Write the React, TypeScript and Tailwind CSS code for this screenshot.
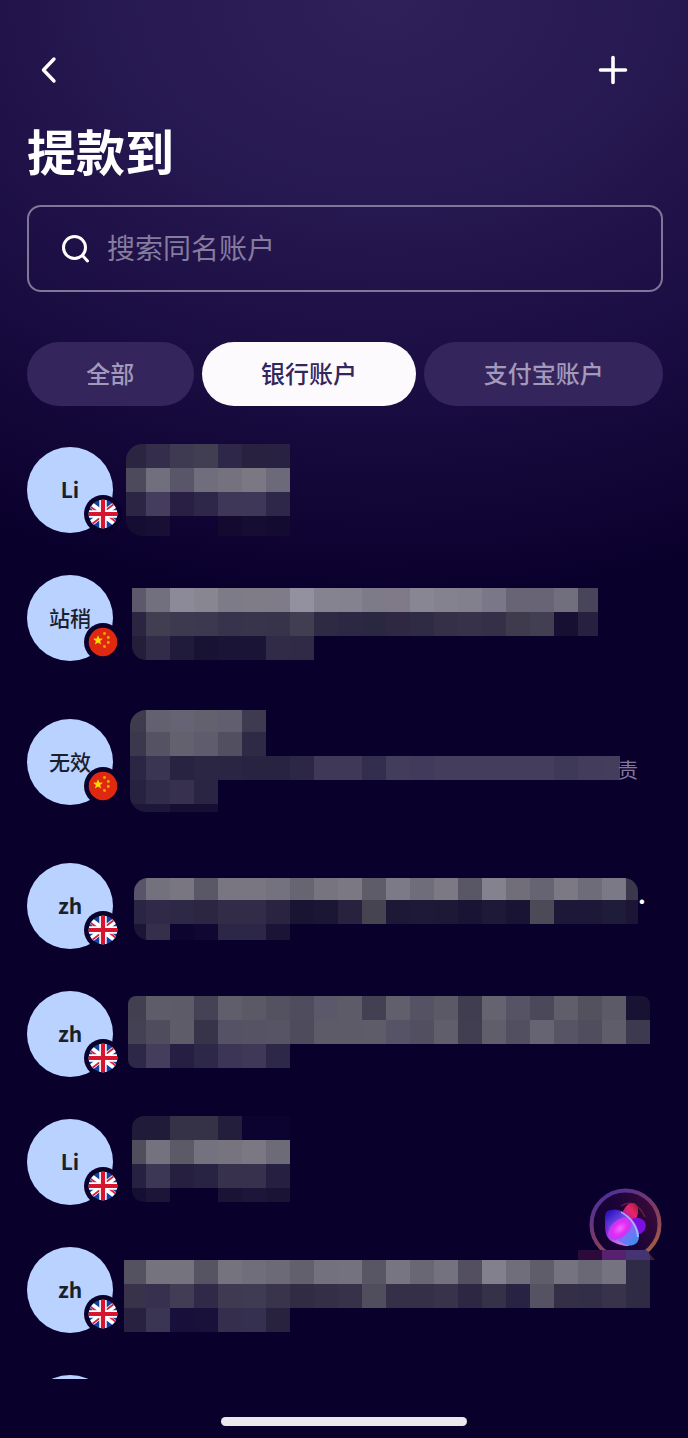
import { useState } from 'react'

interface Strip {
  h: number
  colors: string
}

interface Mosaic {
  x: number // left edge, measured from the avatar
  y: number // top edge inside the row
  width: number
  radius: number
  roundRight?: boolean
  squareTop?: boolean
  strips: Strip[]
}

interface Account {
  id: number
  initials?: string
  country: 'gb' | 'cn'
  tall?: boolean
  tail?: string
  tailClass?: string
  mosaic?: Mosaic
}

const CELL = 24
const GRID_START = 33 // every mosaic snaps to the same column grid

const TABS = [
  { key: 'all', label: '全部' },
  { key: 'bank', label: '银行账户' },
  { key: 'alipay', label: '支付宝账户' },
]

// colors: one hex per cell, "-" leaves the cell empty
const ACCOUNTS: Account[] = [
  {
    id: 1,
    initials: 'Li',
    country: 'gb',
    mosaic: {
      x: 13, y: 18, width: 164, radius: 16,
      strips: [
        { h: 24, colors: '2b2541 342d4b 3e3a51 423e52 2e2749 28213f 282141' },
        { h: 24, colors: '4d4a5c 716f7d 59566a 706e7d 75717f 7b7883 6c697a' },
        { h: 24, colors: '2c2644 453d5d 291f45 2f2749 3f3757 3f3757 2f2749' },
        { h: 20, colors: '150d32 170f34 - - 140a30 160d33 140b30' },
      ],
    },
  },
  {
    id: 2,
    initials: '站稍',
    country: 'cn',
    mosaic: {
      x: 19, y: 34, width: 466, radius: 14, squareTop: true,
      strips: [
        { h: 24, colors: '5d596b 72707e 8c8a98 888690 7e7b89 7f7c88 7f7b89 93919f 85838f 84828e 7e7b88 7f7988 888692 84828f 82808d 7a7788 686476 686476 716e7e 484459' },
        { h: 24, colors: '2a2541 423e52 3d394f 3c384f 37334c 38344c 37334b 423e52 2f2a44 2c2843 292840 2e2842 302b45 353047 37324a 353047 3f3b4d 423f52 171033 27213f' },
        { h: 24, colors: '241e3b 322c49 211b3b 181233 1a1436 1a1436 312b48 302a47' },
      ],
    },
  },
  {
    id: 3,
    initials: '无效',
    country: 'cn',
    tall: true,
    tail: '责',
    tailClass: '-ml-0.5 pt-4 text-[20px] text-[#81799a]',
    mosaic: {
      x: 17, y: 28, width: 490, radius: 16,
      strips: [
        { h: 22, colors: '3f3b4f 63616f 666375 63616e 615e6f 3e3a50' },
        { h: 24, colors: '3b374c 555263 63616d 5f5c6d 524f60 2e2944' },
        { h: 24, colors: '2c2645 3b3554 292342 2c2645 2b2544 292342 292342 2d2746 3f3857 3f3857 342e4e 433d5c 413a5a 443e5c 443e5c 443e5c 443e5c 443e5c 3f3958 433c5a 443d5b' },
        { h: 24, colors: '282241 322c4b 37314f 2b2544' },
        { h: 8, colors: '1d1739 1d1739 170f33 170f33' },
      ],
    },
  },
  {
    id: 4,
    initials: 'zh',
    country: 'gb',
    tail: '.',
    tailClass: 'pb-6 text-2xl text-white font-bold',
    mosaic: {
      x: 21, y: 36, width: 504, radius: 14, roundRight: true,
      strips: [
        { h: 22, colors: '58556a 73717e 797682 5a5766 797682 797682 75727f 686573 777480 7b7883 5f5c69 7d7a87 706d7b 7c7985 595665 85828f 716e7a 666372 7c7985 6f6c7a 7c7986 3c384c' },
        { h: 24, colors: '2a2543 302a48 2e2847 2c2643 322c48 322c48 2a2440 1a1433 1c1635 28223e 474452 1d1836 1e1936 1d1836 1a1434 1e1936 1a1434 4d4a58 1d1837 1d1837 1f1c39 1c1536' },
        { h: 16, colors: '1b1538 352f4b 0d0530 100833 2d2747 2d2747 1b1437' },
      ],
    },
  },
  {
    id: 5,
    initials: 'zh',
    country: 'gb',
    mosaic: {
      x: 15, y: 26, width: 522, radius: 8, roundRight: true,
      strips: [
        { h: 24, colors: '423f51 5f5c69 5e5b69 454256 615e6b 5c5967 545160 4f4c5d 5b5869 5e5b69 444054 625f6c 555263 5c5967 413d50 666371 565365 4b4859 615e6b 54515f 5d5a68 181233' },
        { h: 24, colors: '444155 4f4c5e 5f5c69 373349 555265 565365 575465 4e4b5c 5e5b69 5e5b69 5f5c69 565366 524f60 615e6c 423e51 615e6b 524f60 666372 575466 504d5e 605d6b 3d394e' },
        { h: 24, colors: '2d2748 443d5c 261f43 2d2748 3c3555 3f3857 2e2848' },
      ],
    },
  },
  {
    id: 6,
    initials: 'Li',
    country: 'gb',
    mosaic: {
      x: 19, y: 18, width: 158, radius: 12,
      strips: [
        { h: 24, colors: '211b3a 211b3a 353147 353146 231e3b 0c0330 0c0330' },
        { h: 24, colors: '504d5d 75727f 5d5a67 757280 777480 7b7883 6e6b78' },
        { h: 24, colors: '272141 3d3756 261f40 292343 37314e 37314e 261f41' },
        { h: 14, colors: '160f34 1c1538 - - 1a1336 1d163a 1a1336' },
      ],
    },
  },
  {
    id: 7,
    initials: 'zh',
    country: 'gb',
    mosaic: {
      x: 11, y: 34, width: 526, radius: 0,
      strips: [
        { h: 24, colors: '545160 75737e 75737e 565362 75737e 716e7c 6d6a78 63606d 74717e 75727f 585564 777581 6a6775 757280 544f60 82808c 716e7b 605d6b 767381 6b6876 767380 2f2a45' },
        { h: 24, colors: '38334b 37304f 423d54 302948 3f3951 3f3b52 39344c 312c44 342f47 373149 504d5c 353048 353048 38334a 2d2744 353149 292343 555262 342f47 332e47 38334a 302b45' },
        { h: 24, colors: '28213f 3b3554 18103a 1a113a 352e4c 353050 29223f' },
      ],
    },
  },
  { id: 8, country: 'gb' },
]

// ─── Icons ───────────────────────────────────────────────────────────────────
function BackIcon() {
  return (
    <svg width="16" height="28" viewBox="0 0 16 28" fill="none" stroke="currentColor" strokeWidth="3.4" strokeLinecap="round" strokeLinejoin="round">
      <path d="M13 3 2.500 14 13 25" />
    </svg>
  )
}

function PlusIcon() {
  return (
    <svg width="30" height="30" viewBox="0 0 30 30" fill="none" stroke="currentColor" strokeWidth="3.6" strokeLinecap="round">
      <path d="M15 2.500v25M2.500 15h25" />
    </svg>
  )
}

function SearchIcon() {
  return (
    <svg className="shrink-0" width="30" height="30" viewBox="0 0 30 30" fill="none" stroke="#fff" strokeWidth="3" strokeLinecap="round">
      <circle cx="13.500" cy="13.500" r="11" />
      <path d="m21.500 21.500 5 5.500" />
    </svg>
  )
}

function Flag({ country }: { country: 'gb' | 'cn' }) {
  return (
    <svg className="absolute bottom-0 -right-[9px]" width="38" height="38" viewBox="0 0 38 38">
      <circle cx="19" cy="19" r="19" fill="#0a002c" />
      {country === 'gb' ? (
        <>
          <clipPath id="flag-clip">
            <circle cx="19" cy="19" r="14.3" />
          </clipPath>
          <g clipPath="url(#flag-clip)">
            <path d="M4 4h30v30H4z" fill="#17409a" />
            <path d="M0 4.500 38 33.500M38 4.500 0 33.500" stroke="#fff" strokeWidth="6" />
            <path d="M1 7.500 15 18M23 20l14 10.500M36 4.500 22 15M16 23 2 33.500" stroke="#d8203c" strokeWidth="1.800" />
            <path d="M19 4v30M4 19h30" stroke="#fff" strokeWidth="7.400" />
            <path d="M19 4v30M4 19h30" stroke="#d8152f" strokeWidth="4.200" />
          </g>
        </>
      ) : (
        <>
          <circle cx="19" cy="19" r="14.3" fill="#de2910" />
          <path d="m14 12.300 1.300 3.200 3.600.2-2.800 2.300 1 3.500-3.100-2-3.100 2 1-3.500-2.800-2.300 3.600-.2z" fill="#ffde00" />
          <g fill="#f5a800">
            <circle cx="20.500" cy="10.500" r="1.400" />
            <circle cx="24.300" cy="14.500" r="1.400" />
            <circle cx="24.300" cy="19.500" r="1.400" />
            <circle cx="20.500" cy="23.500" r="1.400" />
          </g>
        </>
      )}
    </svg>
  )
}

// ─── Redacted details ────────────────────────────────────────────────────────
function RedactedText({ id, mosaic }: { id: number; mosaic: Mosaic }) {
  const { x, y, width, radius, roundRight, squareTop, strips } = mosaic
  const height = strips.reduce((sum, s) => sum + s.h, 0)
  const clipId = `mosaic-${id}`
  const extraTop = squareTop ? radius : 0
  let top = y

  return (
    <svg className="shrink-0 self-start" width={x + width} height={y + height} shapeRendering="crispEdges" aria-hidden="true">
      <clipPath id={clipId}>
        <rect x={x} y={y - extraTop} width={roundRight ? width : width + radius} height={height + extraTop} rx={radius} />
      </clipPath>
      <g clipPath={`url(#${clipId})`}>
        {strips.map((strip, row) => {
          const rowTop = top
          top += strip.h
          return strip.colors.split(' ').map((color, col) => {
            if (color === '-') return null
            const left = col === 0 ? x : GRID_START + (col - 1) * CELL
            const w = col === 0 ? GRID_START - x : CELL
            return <rect key={`${row}-${col}`} x={left} y={rowTop} width={w} height={strip.h} fill={`#${color}`} />
          })
        })}
      </g>
    </svg>
  )
}

function AccountRow({ account }: { account: Account }) {
  return (
    <li>
      <button className={`flex w-full items-center text-left ${account.tall ? 'h-40' : 'h-32'}`}>
        <span
          className={`relative flex size-[86px] shrink-0 items-center justify-center rounded-full bg-[#bad2ff] text-[21px] text-[#18202c] ${
            account.country === 'gb' ? 'font-bold' : 'font-medium'
          }`}
        >
          {account.initials}
          <Flag country={account.country} />
        </span>
        {account.mosaic && <RedactedText id={account.id} mosaic={account.mosaic} />}
        {account.tail && <span className={`leading-5 ${account.tailClass}`}>{account.tail}</span>}
      </button>
    </li>
  )
}

// ─── Floating assistant ──────────────────────────────────────────────────────
function AssistantButton() {
  return (
    <button aria-label="助手" className="absolute right-[26px] bottom-[178px]">
      <svg width="84" height="72" viewBox="0 0 84 72">
        <defs>
          <linearGradient id="ring" x1="0.2" y1="0" x2="0.8" y2="1">
            <stop offset="0" stopColor="#4c309e" />
            <stop offset="0.5" stopColor="#7e3a62" />
            <stop offset="1" stopColor="#a8603c" />
          </linearGradient>
          <linearGradient id="disc" x1="0" y1="0.7" x2="1" y2="0.2">
            <stop offset="0" stopColor="#10022f" />
            <stop offset="0.5" stopColor="#1b0338" />
            <stop offset="1" stopColor="#3d0c3a" />
          </linearGradient>
          <linearGradient id="red" x1="0.7" y1="0" x2="0.3" y2="1">
            <stop offset="0" stopColor="#a01c38" />
            <stop offset="0.35" stopColor="#e8246a" />
            <stop offset="1" stopColor="#a312b0" />
          </linearGradient>
          <linearGradient id="blue" x1="0" y1="0.5" x2="1" y2="0.5">
            <stop offset="0" stopColor="#2a14c0" />
            <stop offset="0.5" stopColor="#9a62f4" />
            <stop offset="1" stopColor="#3f8cf2" />
          </linearGradient>
          <linearGradient id="base" x1="0" y1="0" x2="0.3" y2="1">
            <stop offset="0" stopColor="#2c10a8" />
            <stop offset="0.6" stopColor="#8a2ae0" />
            <stop offset="1" stopColor="#d070f0" />
          </linearGradient>
          <radialGradient id="pink">
            <stop offset="0" stopColor="#f468ff" />
            <stop offset="0.6" stopColor="#e32cf4" />
            <stop offset="1" stopColor="#b83cf4" />
          </radialGradient>
        </defs>
        <circle cx="47.500" cy="36.500" r="34" fill="url(#disc)" stroke="url(#ring)" strokeWidth="4" />
        <path d="M43 18c9-6 18-2 24 11" fill="none" stroke="#7a2c38" strokeWidth="1.500" opacity="0.7" />
        <ellipse cx="52" cy="26" rx="7.500" ry="11.500" transform="rotate(22 52 26)" fill="url(#red)" />
        <ellipse cx="58" cy="38.500" rx="10" ry="8.500" transform="rotate(-15 58 38.500)" fill="#7b0fe0" />
        <path d="M33 22c-6 0-6 5-6 14 0 10 2 15 8 18 5 2 9 4 16 4L46 30z" fill="url(#base)" />
        <ellipse cx="44.500" cy="39.500" rx="21" ry="12.500" transform="rotate(50 44.500 39.500)" fill="url(#blue)" />
        <ellipse cx="42" cy="40.500" rx="14" ry="8.500" transform="rotate(-42 42 40.500)" fill="url(#pink)" />
        <path d="M43 24c9 5 16 14 17 25" fill="none" stroke="#d3dcff" strokeWidth="2" opacity="0.6" />
        <path d="M0 62h24v10H0z" fill="#2c0a39" />
        <path d="M24 62h24v10H24z" fill="#58216f" />
        <path d="M48 62h20q4 2 4 6v4H48z" fill="#443473" />
        <path d="M72 66l5 6h-5z" fill="#3a2038" />
      </svg>
    </button>
  )
}

export default function App() {
  const [tab, setTab] = useState('bank')
  const [query, setQuery] = useState('')

  return (
    <div className="relative flex h-screen flex-col overflow-hidden bg-[#0a002c] bg-[radial-gradient(ellipse_120%_600px_at_56%_0px,#30205a_0%,#261850_35%,#1a0d42_65%,#0a002c_100%)] font-['Noto_Sans_CJK_SC','Noto_Sans',sans-serif]">
      <header className="pt-[46px] pr-[25px] pl-[27px]">
        <div className="flex items-center justify-between text-white">
          <button aria-label="返回" className="flex h-12 w-11 items-center justify-center">
            <BackIcon />
          </button>
          <button aria-label="添加" className="mr-7 flex h-12 w-11 items-center justify-center">
            <PlusIcon />
          </button>
        </div>
        <h1 className="mt-6 text-[49px] leading-16 font-bold text-white">提款到</h1>

        <label className="mt-[23px] flex h-[87px] items-center gap-4 rounded-[14px] border-2 border-[#7f7698] px-8">
          <SearchIcon />
          <input
            type="text"
            aria-label="搜索同名账户"
            placeholder="搜索同名账户"
            value={query}
            onChange={(e) => setQuery(e.target.value)}
            className="h-11 min-w-0 flex-1 bg-transparent pb-1 text-[28px] text-white outline-none placeholder:text-[#857c9f]"
          />
        </label>

        <div className="mt-[50px] flex gap-2">
          {TABS.map((t) => (
            <button
              key={t.key}
              onClick={() => setTab(t.key)}
              className={`h-16 flex-auto rounded-full px-14 pb-0.5 text-2xl font-medium whitespace-nowrap ${
                tab === t.key ? 'bg-[#fdfafe] text-[#33265c]' : 'bg-[#34265c] text-[#a399bb]'
              }`}
            >
              {t.label}
            </button>
          ))}
        </div>
      </header>

      <ul className="mt-[19px] min-h-0 flex-1 overflow-hidden pt-px pr-[25px] pl-[27px]">
        {ACCOUNTS.map((account) => (
          <AccountRow key={account.id} account={account} />
        ))}
      </ul>

      <AssistantButton />

      <footer className="flex h-[59px] shrink-0 justify-center pt-[38px]">
        <div className="h-[9px] w-[246px] rounded-full bg-[#ebe9ee]" />
      </footer>
    </div>
  )
}
